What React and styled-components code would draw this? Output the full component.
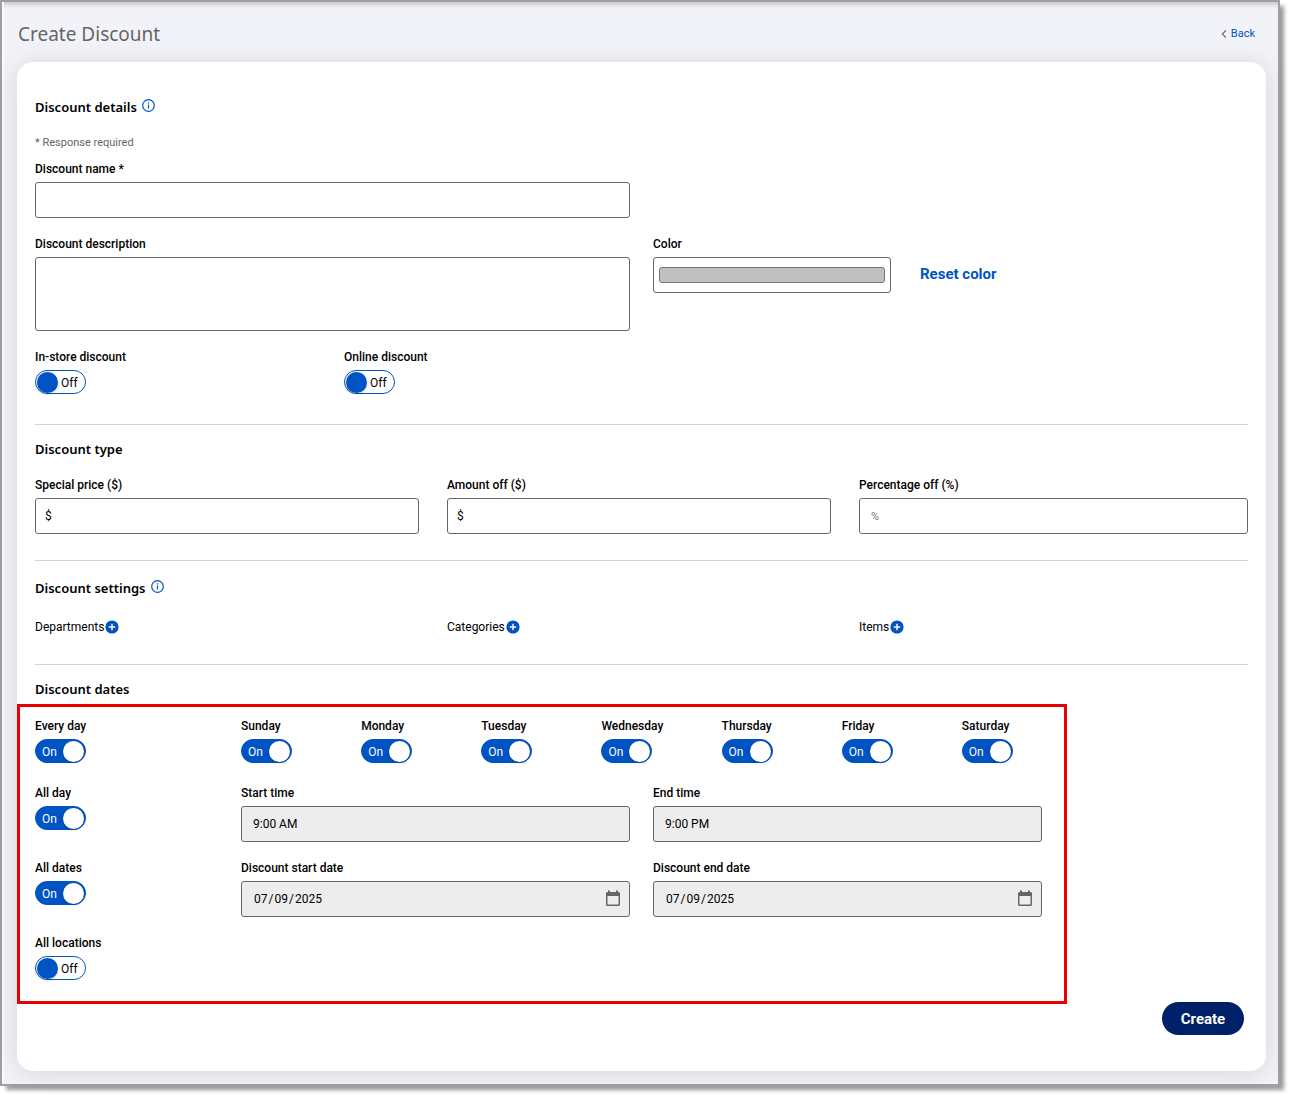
import React, { useId, useState } from "react";
import styled, { createGlobalStyle, css } from "styled-components";

const blue = "#0053c2";
const line = "#666666";

const GlobalStyle = createGlobalStyle`
  *, *::before, *::after { box-sizing: border-box; }
  body {
    margin: 0;
    background: #ffffff;
    color: #000000;
    font-family: Roboto, "Liberation Sans", sans-serif;
    font-size: 12px;
    line-height: 16px;
  }
  button, input, textarea { font: inherit; color: inherit; }
`;

const Frame = styled.div`
  margin: 0 12px 12px 0;
  padding: 0 12px 13px 15px;
  border: 2px solid #a0a0a0;
  background: #f2f3f8;
  box-shadow: inset 2px 0 0 #fafafc, inset 0 5px 5px -3px rgba(0, 0, 0, 0.22),
    5px 5px 4px -1px rgba(0, 0, 0, 0.4);
`;

const Header = styled.header`
  display: flex;
  align-items: center;
  justify-content: space-between;
  padding: 18px 11px 14px 1px;
`;

const PageTitle = styled.h1`
  margin: 0;
  color: #666666;
  font-family: "Noto Sans", "Open Sans", sans-serif;
  font-size: 19px;
  font-weight: 400;
  line-height: 28px;
`;

const BackLink = styled.a`
  display: inline-flex;
  align-items: center;
  gap: 4px;
  color: ${blue};
  font-size: 11px;
  text-decoration: none;
`;

const Card = styled.form`
  padding: 35px 18px 36px;
  border-radius: 16px;
  background: #ffffff;
  box-shadow: 0 2px 24px rgba(0, 0, 0, 0.12);
`;

const Section = styled.section`
  padding: ${(p) => p.$top || 0}px 0 ${(p) => p.$bottom || 0}px;
  ${(p) => p.$divided && css`border-top: 1px solid #d3d3d3;`}
`;

const SectionTitle = styled.h2`
  display: flex;
  align-items: center;
  gap: 5px;
  margin: 0 0 ${(p) => p.$space || 18}px;
  font-family: "Noto Sans", "Open Sans", sans-serif;
  font-size: 13px;
  font-weight: 600;
  line-height: 20px;
`;

const InfoButton = styled.button`
  display: flex;
  padding: 0 0 3px;
  border: 0;
  background: none;
  color: ${blue};
  cursor: pointer;
`;

const Note = styled.p`
  margin: 0 0 10px;
  color: #666666;
  font-size: 11px;
`;

const Grid = styled.div`
  display: grid;
  grid-template-columns: repeat(12, minmax(0, 1fr));
  gap: 18px 23px;
`;

const Cell = styled.div`
  grid-column: ${(p) => p.$start || "auto"} / span ${(p) => p.$span};
  padding-right: ${(p) => (p.$inset ? 5 : 0)}px;
`;

const FieldBox = styled.div`
  display: flex;
  flex-direction: column;
  align-items: ${(p) => (p.$fit ? "flex-start" : "stretch")};
  gap: 5px;
`;

const Label = styled.label`
  font-weight: 500;
  white-space: nowrap;
`;

const control = css`
  display: block;
  width: 100%;
  border: 1px solid ${line};
  border-radius: 3px;
  background: #ffffff;
`;

const Input = styled.input`
  ${control}
  height: 36px;
  padding: 0 ${(p) => (p.$prefix ? 9 : 11)}px;

  &::placeholder { color: #757575; font-size: 11px; opacity: 1; }
  &:disabled { background: #ededed; color: #000000; opacity: 1; }
  &::-webkit-calendar-picker-indicator { display: none; }
`;

const TextArea = styled.textarea`
  ${control}
  height: 74px;
  padding: 8px 11px;
  resize: none;
`;

const ColorRow = styled.div`
  display: flex;
  align-items: flex-end;
  gap: 29px;
`;

const ColorField = styled.div`
  flex: 0 0 40%;
`;

const ColorInput = styled.input`
  ${control}
  appearance: none;
  height: 36px;
  padding: 9px 5px;

  &::-webkit-color-swatch-wrapper { padding: 0; }
  &::-webkit-color-swatch { border: 1px solid #767676; border-radius: 3px; }
`;

const TextButton = styled.button`
  height: 36px;
  padding: 0 0 2px;
  border: 0;
  background: none;
  color: ${blue};
  font-size: 15px;
  font-weight: 700;
  cursor: pointer;
`;

const DateWrap = styled.div`
  position: relative;
`;

const CalendarMark = styled.svg`
  position: absolute;
  top: 9px;
  right: 9px;
  pointer-events: none;
`;

const Switch = styled.span`
  position: relative;
  display: inline-flex;
`;

const SwitchInput = styled.input`
  appearance: none;
  width: 51px;
  height: 24px;
  margin: 0;
  padding-top: 1px;
  border: 1px solid ${blue};
  border-radius: 12px;
  background: #ffffff;
  cursor: pointer;

  &::before {
    content: "";
    display: block;
    width: 21px;
    height: 21px;
    margin-left: 1px;
    border-radius: 50%;
    background: ${blue};
    box-shadow: 0 1px 3px rgba(0, 0, 0, 0.2);
  }
  &:checked { background: ${blue}; }
  &:checked::before { margin-left: 27px; background: #ffffff; }
`;

const SwitchText = styled.span`
  position: absolute;
  top: 5px;
  left: ${(p) => (p.$on ? 7 : 26)}px;
  color: ${(p) => (p.$on ? "#ffffff" : "#000000")};
  pointer-events: none;
`;

const AddRow = styled.div`
  display: flex;
  align-items: center;
  gap: 1px;
  height: 16px;
`;

const AddButton = styled.button`
  display: flex;
  padding: 0;
  border: 0;
  background: none;
  color: ${blue};
  cursor: pointer;
`;

const Highlighted = styled.div`
  position: relative;

  &::after {
    content: "";
    position: absolute;
    top: -14px;
    bottom: -24px;
    left: -18px;
    right: calc(15% - 1px);
    border: 3px solid #ea0000;
    pointer-events: none;
  }
`;

const Stack = styled.div`
  display: grid;
  gap: 22px;
`;

const Days = styled.div`
  display: grid;
  grid-template-columns: repeat(7, minmax(0, 1fr));
  column-gap: 40px;
`;

const Actions = styled.div`
  display: flex;
  justify-content: flex-end;
  padding: 22px 4px 0;
`;

const PrimaryButton = styled.button`
  height: 33px;
  min-width: 82px;
  padding: 0 18px;
  border: 0;
  border-radius: 17px;
  background: #002169;
  color: #ffffff;
  font-size: 15px;
  font-weight: 700;
  cursor: pointer;
`;

function Info({ label }) {
  return (
    <InfoButton type="button" aria-label={label}>
      <svg width="13" height="13" viewBox="0 0 13 13" fill="none" aria-hidden="true">
        <circle cx="6.5" cy="6.5" r="5.8" stroke="currentColor" strokeWidth="1.2" />
        <path d="M6.5 5.4V9.5M6.5 3.2V4.4" stroke="currentColor" strokeWidth="1.2" />
      </svg>
    </InfoButton>
  );
}

function Field({ label, as: Control = Input, fit, ...props }) {
  const id = useId();
  return (
    <FieldBox $fit={fit}>
      <Label htmlFor={id}>{label}</Label>
      <Control id={id} {...props} />
    </FieldBox>
  );
}

function ToggleControl({ id, initial }) {
  const [on, setOn] = useState(Boolean(initial));
  return (
    <Switch>
      <SwitchInput
        id={id}
        type="checkbox"
        role="switch"
        checked={on}
        onChange={(e) => setOn(e.target.checked)}
      />
      <SwitchText $on={on} aria-hidden="true">{on ? "On" : "Off"}</SwitchText>
    </Switch>
  );
}

function Toggle({ label, on }) {
  return <Field fit as={ToggleControl} label={label} initial={on} />;
}

function DateControl(props) {
  return (
    <DateWrap>
      <Input type="date" disabled {...props} />
      <CalendarMark width="16" height="17" viewBox="0 0 16 17" aria-hidden="true">
        <path
          fill="#666666"
          fillRule="evenodd"
          d="M3 0.5h2v1.500h6V0.500h2V2h0.500A1.500 1.500 0 0 1 15 3.500v11A1.500 1.500 0 0 1 13.500 16h-11A1.500 1.500 0 0 1 1 14.500v-11A1.500 1.500 0 0 1 2.500 2H3zM2.500 6v8.500h11V6z"
        />
      </CalendarMark>
    </DateWrap>
  );
}

function Add({ label }) {
  return (
    <AddRow>
      <span>{label}</span>
      <AddButton type="button" aria-label={`Add ${label}`}>
        <svg width="14" height="14" viewBox="0 0 14 14" aria-hidden="true">
          <circle cx="7" cy="7" r="6.6" fill="currentColor" />
          <path d="M7 3.800v6.400M3.800 7h6.400" stroke="#ffffff" strokeWidth="1.400" />
        </svg>
      </AddButton>
    </AddRow>
  );
}

const days = ["Sunday", "Monday", "Tuesday", "Wednesday", "Thursday", "Friday", "Saturday"];

export default function App() {
  const [color, setColor] = useState("#c0c0c0");

  return (
    <>
      <GlobalStyle />
      <Frame>
        <Header>
          <PageTitle>Create Discount</PageTitle>
          <BackLink href="#back">
            <svg width="6" height="8" viewBox="0 0 6 8" fill="none" aria-hidden="true">
              <path d="M4.800 0.500L1.300 4l3.500 3.500" stroke="#666666" strokeWidth="1.100" />
            </svg>
            Back
          </BackLink>
        </Header>

        <Card onSubmit={(e) => e.preventDefault()}>
          <Section $bottom={30}>
            <SectionTitle>
              Discount details <Info label="About discount details" />
            </SectionTitle>
            <Note>* Response required</Note>
            <Grid>
              <Cell $span={6}><Field label="Discount name *" type="text" /></Cell>
              <Cell $start={1} $span={6}><Field label="Discount description" as={TextArea} /></Cell>
              <Cell $span={6}>
                <ColorRow>
                  <ColorField>
                    <Field
                      label="Color"
                      as={ColorInput}
                      type="color"
                      value={color}
                      onChange={(e) => setColor(e.target.value)}
                    />
                  </ColorField>
                  <TextButton type="button" onClick={() => setColor("#c0c0c0")}>Reset color</TextButton>
                </ColorRow>
              </Cell>
              <Cell $start={1} $span={3}><Toggle label="In-store discount" /></Cell>
              <Cell $span={3}><Toggle label="Online discount" /></Cell>
            </Grid>
          </Section>

          <Section $divided $top={14} $bottom={26}>
            <SectionTitle>Discount type</SectionTitle>
            <Grid>
              <Cell $span={4} $inset>
                <Field label="Special price ($)" type="text" defaultValue="$" $prefix />
              </Cell>
              <Cell $span={4} $inset>
                <Field label="Amount off ($)" type="text" defaultValue="$" $prefix />
              </Cell>
              <Cell $span={4}><Field label="Percentage off (%)" type="text" placeholder="%" /></Cell>
            </Grid>
          </Section>

          <Section $divided $top={17} $bottom={29}>
            <SectionTitle $space={21}>
              Discount settings <Info label="About discount settings" />
            </SectionTitle>
            <Grid>
              <Cell $span={4}><Add label="Departments" /></Cell>
              <Cell $span={4}><Add label="Categories" /></Cell>
              <Cell $span={4}><Add label="Items" /></Cell>
            </Grid>
          </Section>

          <Section $divided $top={14}>
            <SectionTitle $space={19}>Discount dates</SectionTitle>
            <Highlighted>
              <Stack>
                <Grid>
                  <Cell $span={2}><Toggle label="Every day" on /></Cell>
                  <Cell $span={8}>
                    <Days>
                      {days.map((day) => <Toggle key={day} label={day} on />)}
                    </Days>
                  </Cell>
                </Grid>
                <Grid>
                  <Cell $span={2}><Toggle label="All day" on /></Cell>
                  <Cell $span={4}><Field label="Start time" type="text" defaultValue="9:00 AM" disabled /></Cell>
                  <Cell $span={4}><Field label="End time" type="text" defaultValue="9:00 PM" disabled /></Cell>
                  <Cell $start={1} $span={2}><Toggle label="All dates" on /></Cell>
                  <Cell $span={4}><Field label="Discount start date" as={DateControl} defaultValue="2025-07-09" /></Cell>
                  <Cell $span={4}><Field label="Discount end date" as={DateControl} defaultValue="2025-07-09" /></Cell>
                  <Cell $start={1} $span={2}><Toggle label="All locations" /></Cell>
                </Grid>
              </Stack>
            </Highlighted>
          </Section>

          <Actions>
            <PrimaryButton type="submit">Create</PrimaryButton>
          </Actions>
        </Card>
      </Frame>
    </>
  );
}
